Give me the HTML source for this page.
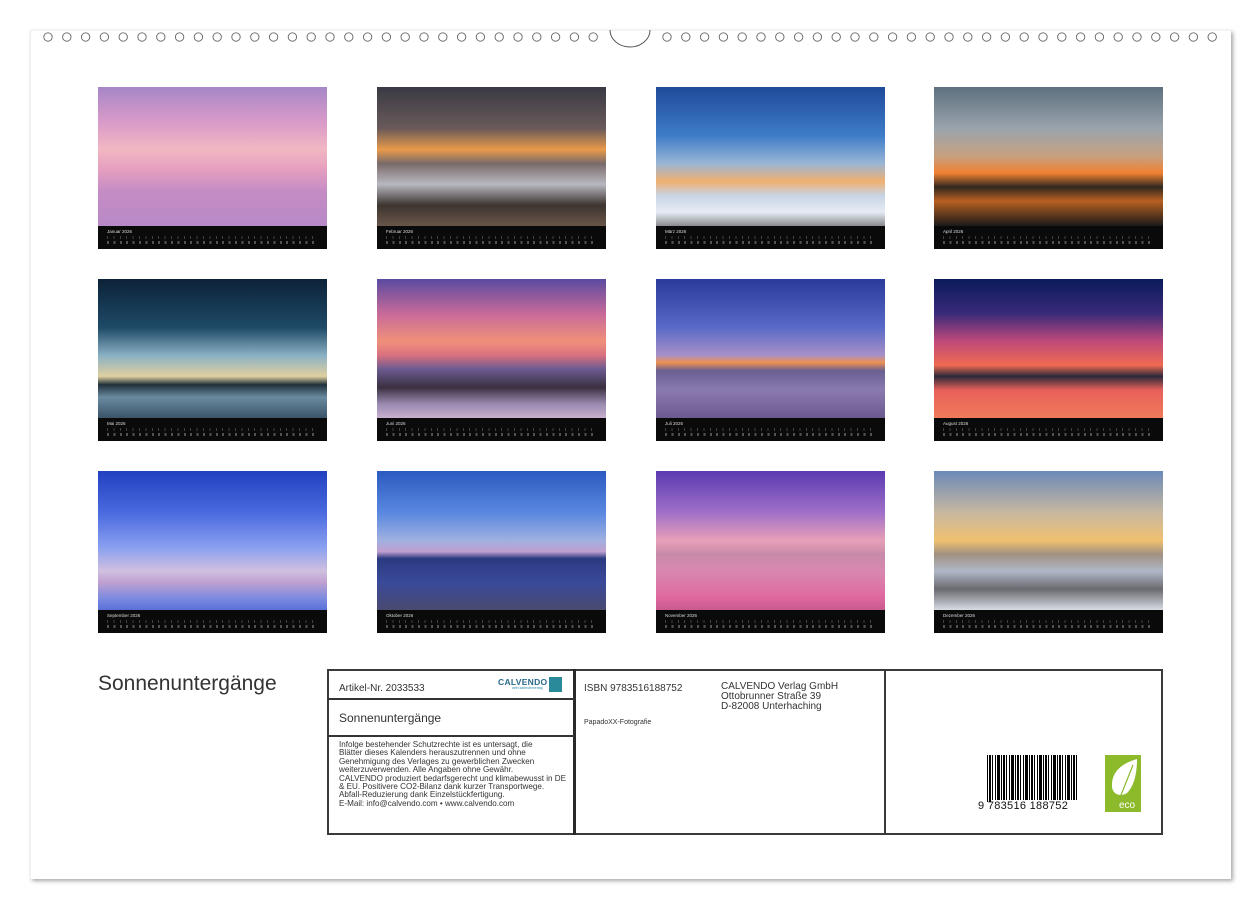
<!DOCTYPE html><html><head><meta charset="utf-8"><style>
body{margin:0;width:1260px;height:908px;background:#fff;position:relative;overflow:hidden;font-family:"Liberation Sans",sans-serif}
.page{position:absolute;left:30px;top:30px;width:1200px;height:848px;background:#fff;box-shadow:2px 2px 4px rgba(0,0,0,.35);border-left:1px solid #eee;border-top:1px solid #f2f2f2}
.ph{position:absolute;width:229px;height:162px}
.img{position:absolute;left:0;top:0;width:229px;height:139px}
.cal{position:absolute;left:0;top:139px;width:229px;height:23px;background:#0a0a0a;color:#ddd;font-size:4px}
.cal b{position:absolute;left:9px;top:3px;font-weight:normal;font-size:4.5px}
.cal i{position:absolute;left:9px;top:10px;right:9px;height:3px;background:repeating-linear-gradient(90deg,#777 0 1px,transparent 1px 6.4px);opacity:.5}
.cal u{position:absolute;left:9px;top:15px;right:9px;height:3px;background:repeating-linear-gradient(90deg,#999 0 2px,transparent 2px 6.4px);opacity:.5}
.box{position:absolute;border:2px solid #3a3a3a;box-sizing:border-box}
.t{position:absolute;color:#333;white-space:nowrap}
</style></head><body>
<div class="page"></div>
<svg style="position:absolute;left:0;top:0" width="1260" height="60">
<g fill="none" stroke="#555" stroke-width="1">
<path d="M610 30 A20 17 0 0 0 650 30"/>
</g>
<g id="r" fill="none" stroke="#666" stroke-width="0.9"></g>
</svg>
<script>
var g=document.getElementById('r'),s='';
for(var i=0;i<30;i++){var x=48+i*18.8;s+='<circle cx="'+x+'" cy="37" r="4.2"/>';}
for(var i=0;i<30;i++){var x=667+i*18.8;s+='<circle cx="'+x+'" cy="37" r="4.2"/>';}
g.innerHTML=s;
</script>

<div class="ph" style="left:98px;top:87px"><div class="img" style="background:linear-gradient(180deg,#a687c7 0%,#d89ac9 25%,#f2b7c2 45%,#e7a1bf 58%,#c58cc4 75%,#b889c8 100%)"></div><div class="cal"><b>Januar 2026</b><i></i><u></u></div></div>
<div class="ph" style="left:377px;top:87px"><div class="img" style="background:linear-gradient(180deg,#3a3a44 0%,#6a5a5a 30%,#e99a4a 45%,#7a6a6a 55%,#b8b8c0 70%,#3d3530 85%,#6a5548 100%)"></div><div class="cal"><b>Februar 2026</b><i></i><u></u></div></div>
<div class="ph" style="left:656px;top:87px"><div class="img" style="background:linear-gradient(180deg,#1e4a9a 0%,#3e7cc8 35%,#9ab6d6 55%,#f0b070 68%,#c8d4e4 78%,#e6ecf4 90%,#8a8a90 100%)"></div><div class="cal"><b>März 2026</b><i></i><u></u></div></div>
<div class="ph" style="left:934px;top:87px"><div class="img" style="background:linear-gradient(180deg,#5e7080 0%,#9aa4ac 30%,#c8a080 50%,#f08030 62%,#302820 72%,#b86020 82%,#1a1a1a 100%)"></div><div class="cal"><b>April 2026</b><i></i><u></u></div></div>

<div class="ph" style="left:98px;top:279px"><div class="img" style="background:linear-gradient(180deg,#0c2238 0%,#1e4a68 35%,#8ab0c4 55%,#e0d0a0 70%,#20303a 76%,#6a8aa0 85%,#3a5468 100%)"></div><div class="cal"><b>Mai 2026</b><i></i><u></u></div></div>
<div class="ph" style="left:377px;top:279px"><div class="img" style="background:linear-gradient(180deg,#5a4aa0 0%,#c86a9a 25%,#f0907a 45%,#d87080 55%,#6a5a90 65%,#3a3040 78%,#9a8ab0 90%,#c8b0d0 100%)"></div><div class="cal"><b>Juni 2026</b><i></i><u></u></div></div>
<div class="ph" style="left:656px;top:279px"><div class="img" style="background:linear-gradient(180deg,#2a3a9a 0%,#5a6ac8 35%,#a890c8 55%,#f09050 60%,#6a6090 66%,#8a7ab0 80%,#6a5a90 100%)"></div><div class="cal"><b>Juli 2026</b><i></i><u></u></div></div>
<div class="ph" style="left:934px;top:279px"><div class="img" style="background:linear-gradient(180deg,#0a1a5a 0%,#3a2a7a 25%,#c04a7a 45%,#f06a50 62%,#2a2a3a 70%,#e8605a 80%,#f07a5a 100%)"></div><div class="cal"><b>August 2026</b><i></i><u></u></div></div>

<div class="ph" style="left:98px;top:471px"><div class="img" style="background:linear-gradient(180deg,#2040c0 0%,#4a6ae0 30%,#8aa0f0 55%,#d0c0e0 72%,#c0a0d0 80%,#7a8ae0 92%,#5a70d8 100%)"></div><div class="cal"><b>September 2026</b><i></i><u></u></div></div>
<div class="ph" style="left:377px;top:471px"><div class="img" style="background:linear-gradient(180deg,#2a5ac0 0%,#5a88e0 30%,#a0b0e0 50%,#c0a0d0 58%,#2a3a80 63%,#3a4a9a 80%,#4a4a70 100%)"></div><div class="cal"><b>Oktober 2026</b><i></i><u></u></div></div>
<div class="ph" style="left:656px;top:471px"><div class="img" style="background:linear-gradient(180deg,#5a3ab0 0%,#a070c8 30%,#e8a0b8 50%,#c88aa8 60%,#d888b0 72%,#e06aa0 90%,#c85a90 100%)"></div><div class="cal"><b>November 2026</b><i></i><u></u></div></div>
<div class="ph" style="left:934px;top:471px"><div class="img" style="background:linear-gradient(180deg,#6a8ab8 0%,#c8b8a0 30%,#f0c070 50%,#a09080 60%,#b0b8c8 72%,#6a6a70 85%,#d8dce4 100%)"></div><div class="cal"><b>Dezember 2026</b><i></i><u></u></div></div>

<div class="t" style="left:98px;top:672px;font-size:21px;color:#333">Sonnenuntergänge</div>

<div class="box" style="left:327px;top:669px;width:836px;height:166px"></div>
<div style="position:absolute;left:573px;top:669px;width:3px;height:166px;background:#2a2a2a"></div>
<div style="position:absolute;left:884px;top:669px;width:2px;height:166px;background:#3a3a3a"></div>
<div style="position:absolute;left:327px;top:698px;width:248px;height:2px;background:#333"></div>
<div style="position:absolute;left:327px;top:735px;width:248px;height:2px;background:#333"></div>

<div class="t" style="left:339px;top:683px;font-size:10px">Artikel-Nr. 2033533</div>
<div class="t" style="left:498px;top:677px;font-size:8.5px;color:#2a6a8a;font-weight:bold;letter-spacing:.3px">CALVENDO</div>
<div class="t" style="left:512px;top:686px;font-size:3.5px;color:#2a8aaa">dein kalenderverlag</div>
<div style="position:absolute;left:549px;top:677px;width:13px;height:15px;background:#2a8a9a"></div>
<div class="t" style="left:339px;top:711px;font-size:12px">Sonnenuntergänge</div>
<div class="t" style="left:339px;top:741px;font-size:8.1px;line-height:8.4px;color:#333">Infolge bestehender Schutzrechte ist es untersagt, die<br>Blätter dieses Kalenders herauszutrennen und ohne<br>Genehmigung des Verlages zu gewerblichen Zwecken<br>weiterzuverwenden. Alle Angaben ohne Gewähr.<br>CALVENDO produziert bedarfsgerecht und klimabewusst in DE<br>&amp; EU. Positivere CO2-Bilanz dank kurzer Transportwege.<br>Abfall-Reduzierung dank Einzelstückfertigung.<br>E-Mail: info@calvendo.com • www.calvendo.com</div>

<div class="t" style="left:584px;top:683px;font-size:10px">ISBN 9783516188752</div>
<div class="t" style="left:721px;top:682px;font-size:10px;line-height:10px">CALVENDO Verlag GmbH<br>Ottobrunner Straße 39<br>D-82008 Unterhaching</div>
<div class="t" style="left:584px;top:719px;font-size:7px">PapadoXX-Fotografie</div>

<div style="position:absolute;left:987px;top:755px;width:92px;height:47px;background:repeating-linear-gradient(90deg,#000 0 1px,#fff 1px 2px,#000 2px 4px,#fff 4px 5px,#000 5px 6px,#fff 6px 8px,#000 8px 9px,#fff 9px 10px,#000 10px 13px,#fff 13px 14px)"></div>
<div style="position:absolute;left:991px;top:800px;width:88px;height:13px;background:#fff"></div>
<div class="t" style="left:978px;top:800px;font-size:11px;color:#111;letter-spacing:.3px">9 783516 188752</div>
<div style="position:absolute;left:1105px;top:755px;width:36px;height:57px;background:#8cba2a"></div>
<svg style="position:absolute;left:1105px;top:755px" width="36" height="57"><path d="M32 4 C18 8 6 16 7 32 C8 40 16 42 22 38 C30 30 32 16 32 4Z" fill="#fff"/><path d="M28 10 L12 50" stroke="#8cba2a" stroke-width="1.2"/><text x="14" y="53" font-size="10" fill="#fff" font-family="Liberation Sans">eco</text></svg>
</body></html>
